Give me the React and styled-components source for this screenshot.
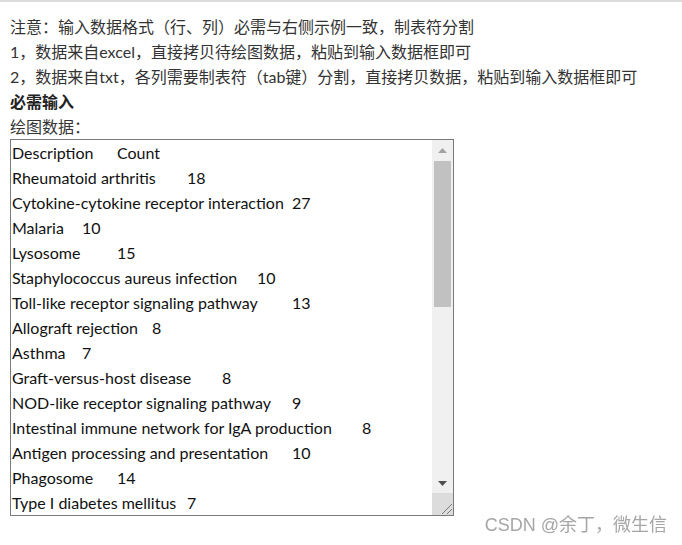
import styled, { createGlobalStyle } from 'styled-components';

const GlobalStyle = createGlobalStyle`
  body {
    margin: 0;
    background: #fff;
  }
`;

const Page = styled.div`
  border-top: 2px solid #dcdcdc;
  padding: 12px 10px 0;
  font-family: Lato, "Noto Sans CJK SC", sans-serif;
  font-size: 16px;
  color: #333;
`;

const Line = styled.div`
  line-height: 25px;
  font-weight: ${(props) => (props.$bold ? 700 : 400)};
  color: ${(props) => (props.$bold ? '#222' : '#333')};
  white-space: nowrap;
`;

const InputFrame = styled.div`
  display: flex;
  box-sizing: border-box;
  width: 444px;
  height: 377px;
  border: 1px solid #7a7a7a;
  background: #fff;
`;

const DataInput = styled.textarea`
  flex: 1;
  min-width: 0;
  margin: 0;
  padding: 0 1px;
  border: none;
  outline: none;
  font-family: Lato, "Noto Sans CJK SC", sans-serif;
  font-size: 16px;
  line-height: 25px;
  color: #111;
  background: #fff;
  tab-size: 35px;
  resize: none;
  overflow: hidden;
`;

// drawn scrollbar, the page is shot with native scrollbars hidden
const ScrollBar = styled.div`
  display: flex;
  flex-direction: column;
  width: 21px;
  flex-shrink: 0;
  background: #f0f0f0;
`;

const ArrowButton = styled.div`
  display: flex;
  align-items: center;
  justify-content: center;
  height: 20px;
  flex-shrink: 0;
`;

const Track = styled.div`
  flex: 1;
  padding-top: 1px;
`;

const Thumb = styled.div`
  margin: 0 2px;
  background: #c1c1c1;
`;

const Corner = styled.div`
  display: flex;
  align-items: flex-end;
  justify-content: flex-end;
  height: 22px;
  flex-shrink: 0;
  background: #dcdcdc;
`;

const Watermark = styled.div`
  position: fixed;
  right: 15px;
  bottom: 10px;
  font-family: "Liberation Sans", "Noto Sans CJK SC", sans-serif;
  font-size: 18px;
  line-height: 20px;
  color: #a6a6a6;
  text-shadow: 0 0 1px #fff;
  pointer-events: none;
`;

const rows = [
  ['Description', 'Count'],
  ['Rheumatoid arthritis', 18],
  ['Cytokine-cytokine receptor interaction', 27],
  ['Malaria', 10],
  ['Lysosome', 15],
  ['Staphylococcus aureus infection', 10],
  ['Toll-like receptor signaling pathway', 13],
  ['Allograft rejection', 8],
  ['Asthma', 7],
  ['Graft-versus-host disease', 8],
  ['NOD-like receptor signaling pathway', 9],
  ['Intestinal immune network for IgA production', 8],
  ['Antigen processing and presentation', 10],
  ['Phagosome', 14],
  ['Type I diabetes mellitus', 7],
  ['Hematopoietic cell lineage', 11],
  ['Chemokine signaling pathway', 16],
  ['Cell adhesion molecules', 12],
  ['Leishmaniasis', 9],
  ['Tuberculosis', 14],
  ['Systemic lupus erythematosus', 12],
  ['Inflammatory bowel disease', 8],
  ['Th17 cell differentiation', 10],
  ['Th1 and Th2 cell differentiation', 9],
  ['Autoimmune thyroid disease', 6],
  ['Natural killer cell mediated cytotoxicity', 11],
  ['IL-17 signaling pathway', 9],
  ['TNF signaling pathway', 10],
  ['Toxoplasmosis', 8],
  ['Complement and coagulation cascades', 7],
  ['Pertussis', 7],
  ['Legionellosis', 6],
];

const sample = rows.map((r) => r.join('\t')).join('\n');

const VISIBLE = 375;
const TRACK = 312;

const App = () => {
  // thumb length follows visible / total content height
  const contentHeight = rows.length * 25;
  const thumbHeight = Math.round((TRACK * VISIBLE) / contentHeight);

  return (
    <>
      <GlobalStyle />
      <Page lang="zh-CN">
        <Line>注意：输入数据格式（行、列）必需与右侧示例一致，制表符分割</Line>
        <Line>1，数据来自excel，直接拷贝待绘图数据，粘贴到输入数据框即可</Line>
        <Line>2，数据来自txt，各列需要制表符（tab键）分割，直接拷贝数据，粘贴到输入数据框即可</Line>
        <Line $bold>必需输入</Line>
        <Line>绘图数据：</Line>
        <InputFrame>
          <DataInput defaultValue={sample} spellCheck={false} />
          <ScrollBar>
            <ArrowButton>
              <svg width="9" height="5" viewBox="0 0 9 5">
                <path d="M0 5 L4.5 0 L9 5 Z" fill="#a3a3a3" />
              </svg>
            </ArrowButton>
            <Track>
              <Thumb style={{ height: thumbHeight }} />
            </Track>
            <ArrowButton>
              <svg width="9" height="5" viewBox="0 0 9 5">
                <path d="M0 0 L9 0 L4.5 5 Z" fill="#505050" />
              </svg>
            </ArrowButton>
            <Corner>
              <svg width="14" height="14" viewBox="0 0 14 14">
                <path d="M13 3 L3 13 M13 8 L8 13" stroke="#7d7d7d" strokeWidth="1" />
              </svg>
            </Corner>
          </ScrollBar>
        </InputFrame>
      </Page>
      <Watermark lang="zh-CN">CSDN @余丁，微生信</Watermark>
    </>
  );
};

export default App;
